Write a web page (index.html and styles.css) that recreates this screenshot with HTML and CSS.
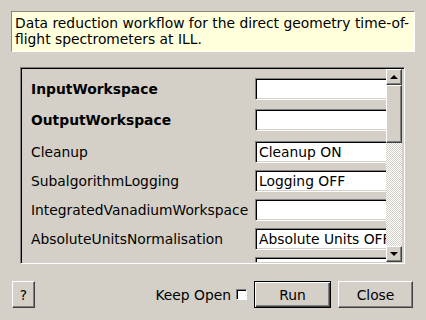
FILE: index.html
```html
<!DOCTYPE html>
<html lang="en">
<head>
    <meta charset="UTF-8">
    <meta name="viewport" content="width=device-width, initial-scale=1.0">
    <title>DirectILLReduction</title>
    <link rel="stylesheet" href="styles.css">
</head>
<body>
    <div class="dialog">
        <div class="desc">Data reduction workflow for the direct geometry time-of-flight spectrometers at ILL.</div>
        <div class="props">
            <div class="props-view">
                <div class="row req">
                    <span class="label">InputWorkspace</span>
                    <span class="field"></span>
                </div>
                <div class="row req">
                    <span class="label">OutputWorkspace</span>
                    <span class="field"></span>
                </div>
                <div class="row first-opt">
                    <span class="label">Cleanup</span>
                    <span class="field">Cleanup ON</span>
                </div>
                <div class="row">
                    <span class="label">SubalgorithmLogging</span>
                    <span class="field">Logging OFF</span>
                </div>
                <div class="row">
                    <span class="label">IntegratedVanadiumWorkspace</span>
                    <span class="field"></span>
                </div>
                <div class="row">
                    <span class="label">AbsoluteUnitsNormalisation</span>
                    <span class="field">Absolute Units OFF</span>
                </div>
                <div class="row">
                    <span class="label">DiagnosticsWorkspace</span>
                    <span class="field"></span>
                </div>
            </div>
            <div class="scrollbar">
                <div class="sb-btn"><span class="arrow-up"></span></div>
                <div class="sb-handle"></div>
                <div class="sb-track"></div>
                <div class="sb-btn"><span class="arrow-down"></span></div>
            </div>
        </div>
        <div class="buttons">
            <button class="btn help">?</button>
            <label class="keep-open">Keep Open <span class="check"></span></label>
            <button class="btn run">Run</button>
            <button class="btn close">Close</button>
        </div>
    </div>
</body>
</html>
```

FILE: styles.css
```css
body {
    margin: 0;
    padding: 0;
    background-color: #d4d0c8;
    color: #000;
    font-family: 'DejaVu Sans', sans-serif;
    font-size: 13.85px;
}
.dialog {
    width: 426px;
    height: 320px;
    overflow: hidden;
}
.desc {
    margin: 11px 11px 0 11px;
    height: 41px;
    box-sizing: border-box;
    padding: 3px 3px 0 3px;
    line-height: 16px;
    background-color: #ffffdc;
    border: 1px solid;
    border-color: #8a8780 #fff #fff #8a8780;
}
.props {
    margin: 15px 0 0 20px;
    width: 385px;
    height: 197px;
    box-sizing: border-box;
    padding: 1px 2px 1px 1px;
    display: flex;
    border: 1px solid;
    border-color: #808080 #fff #fff #808080;
    box-shadow: inset 1px 1px 0 #000, inset -1px -1px 0 #d4d0c8;
}
.props-view {
    flex: 1;
    overflow: hidden;
    padding: 4px 0 0 9px;
}
.row {
    display: flex;
    align-items: center;
    height: 29px;
    white-space: nowrap;
}
.row.req {
    height: 31px;
    font-weight: bold;
}
.row.first-opt {
    margin-top: 2px;
}
.label {
    flex: none;
    width: 224px;
}
.field {
    flex: none;
    width: 170px;
    height: 22px;
    box-sizing: border-box;
    padding: 0 3px;
    line-height: 20px;
    font-weight: normal;
    background-color: #fff;
    border: 1px solid;
    border-color: #808080 #fff #fff #808080;
    box-shadow: inset 1px 1px 0 #000, inset -1px -1px 0 #d4d0c8;
}
.scrollbar {
    flex: none;
    width: 16px;
    display: flex;
    flex-direction: column;
}
.sb-btn,
.sb-handle {
    box-sizing: border-box;
    background-color: #d4d0c8;
    border: 1px solid;
    border-color: #fff #404040 #404040 #fff;
    box-shadow: inset -1px -1px 0 #808080;
}
.sb-btn {
    height: 16px;
    display: flex;
    align-items: center;
    justify-content: center;
}
.sb-handle {
    height: 58px;
}
.sb-track {
    flex: 1;
    background: repeating-conic-gradient(#d4d0c8 0 25%, #fff 0 50%) 0 0 / 2px 2px;
}
.arrow-up,
.arrow-down {
    width: 0;
    height: 0;
    border-left: 4px solid transparent;
    border-right: 4px solid transparent;
    margin-right: 1px;
}
.arrow-up {
    border-bottom: 4px solid #000;
}
.arrow-down {
    border-top: 4px solid #000;
}
.buttons {
    display: flex;
    align-items: center;
    margin-top: 17px;
    padding: 0 13px 0 12px;
}
.btn {
    height: 27px;
    box-sizing: border-box;
    padding: 0;
    font-family: inherit;
    font-size: inherit;
    color: #000;
    background-color: #d4d0c8;
    border: 1px solid;
    border-color: #fff #404040 #404040 #fff;
    box-shadow: inset -1px -1px 0 #808080;
}
.help {
    width: 23px;
}
.keep-open {
    margin-left: auto;
    display: flex;
    align-items: center;
    gap: 5px;
}
.check {
    width: 11px;
    height: 11px;
    box-sizing: border-box;
    background-color: #fff;
    border: 1px solid;
    border-color: #808080 #fff #fff #808080;
    box-shadow: inset 1px 1px 0 #000;
}
.run {
    width: 77px;
    margin-left: 7px;
    border-color: #000;
    box-shadow: inset 1px 1px 0 #fff, inset -1px -1px 0 #404040, inset -2px -2px 0 #808080;
}
.close {
    width: 75px;
    margin-left: 7px;
}
```
